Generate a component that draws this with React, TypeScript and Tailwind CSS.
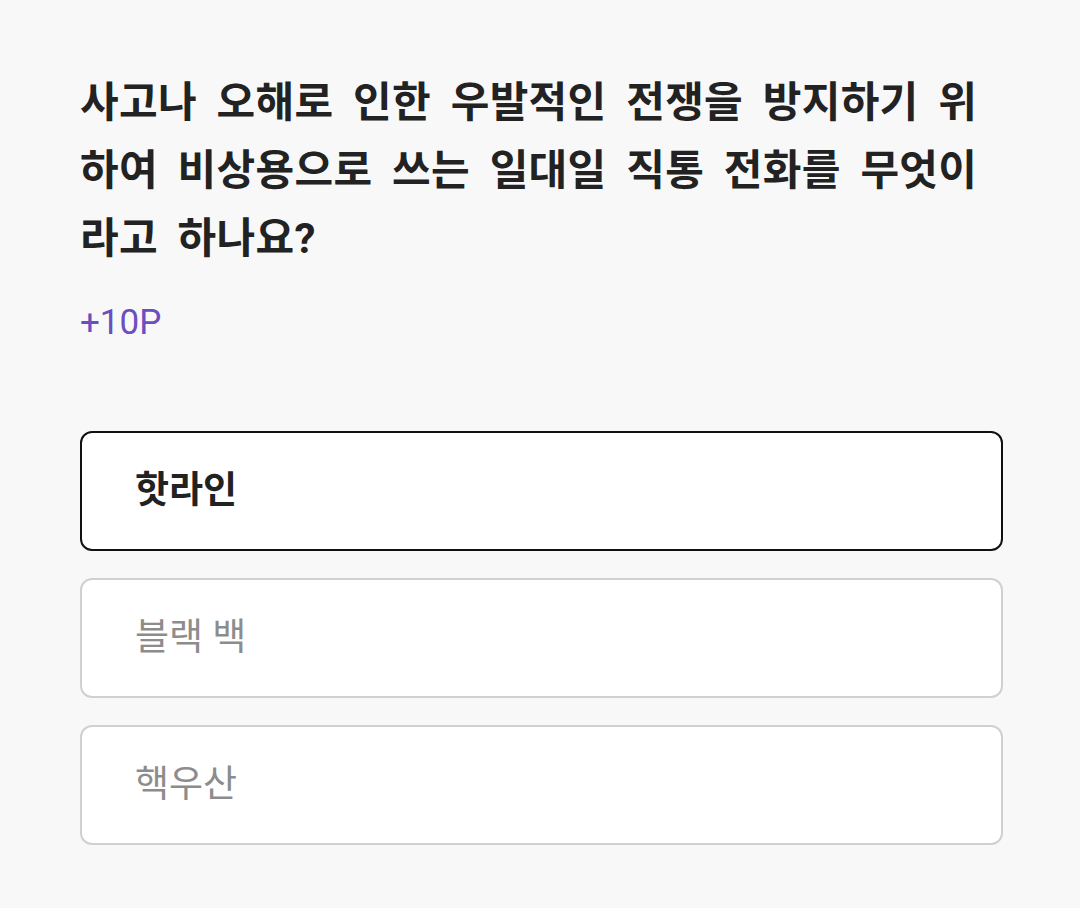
import React from "react";

export default function App() {
  const options = [
    { label: "핫라인", selected: true },
    { label: "블랙 백", selected: false },
    { label: "핵우산", selected: false },
  ];
  return (
    <div
      className="w-[1080px] h-[908px] bg-[#f8f8f8] px-[80px] pt-[69px]"
      style={{ fontFamily: 'Roboto, "Noto Sans CJK KR", sans-serif' }}
    >
      <h1 className="text-[42px] leading-[68px] font-bold text-[#222222] w-[920px] tracking-[0.3px] [word-spacing:9px]">
        사고나 오해로 인한 우발적인 전쟁을 방지하기 위하여 비상용으로 쓰는 일대일 직통 전화를 무엇이라고 하나요?
      </h1>
      <div className="mt-[26px] text-[35px] leading-[48px] text-[#6b4fbf]">+10P</div>
      <div className="mt-[84px] flex flex-col gap-[27px] w-[923px]">
        {options.map((o) => (
          <div
            key={o.label}
            className={
              o.selected
                ? "h-[120px] rounded-[12px] border-2 border-[#111111] bg-white flex items-center pl-[53px] text-[37px] font-bold text-[#222222]"
                : "h-[120px] rounded-[12px] border-2 border-[#d0d0d0] bg-white flex items-center pl-[53px] text-[37px] text-[#8c8c8c]"
            }
          >
            {o.label}
          </div>
        ))}
      </div>
    </div>
  );
}
